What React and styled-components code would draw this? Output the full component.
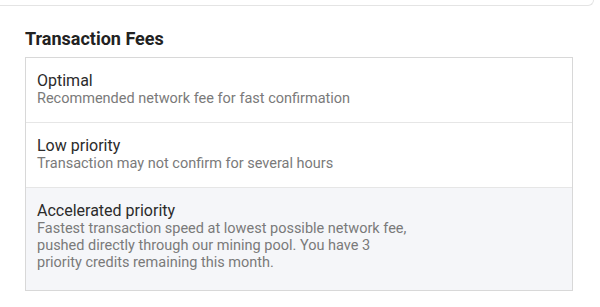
import styled, { createGlobalStyle } from 'styled-components';

const Global = createGlobalStyle`
  body {
    margin: 0;
    background: #ffffff;
    font-family: Roboto, "Liberation Sans", sans-serif;
  }
`;

const Page = styled.div`
  width: 600px;
  height: 307px;
  overflow: hidden;
  background: #fff;
`;

const PrevCard = styled.div`
  width: 594px;
  height: 6px;
  border-bottom: 1px solid #e4e4e4;
  border-right: 1px solid #e4e4e4;
  border-bottom-right-radius: 6px;
  box-sizing: border-box;
`;

const Section = styled.section`
  padding: 22px 27px 0 25px;
`;

const Title = styled.h2`
  margin: 0 0 8px;
  font-size: 18px;
  line-height: 21px;
  font-weight: 700;
  color: #222;
`;

const List = styled.div`
  border: 1px solid #d8d8d8;
  display: flex;
  flex-direction: column;
`;

const Option = styled.div`
  padding: 14px 11px ${p => (p.selected ? '19px' : '15px')};
  background: ${p => (p.selected ? '#f5f6f9' : '#fff')};
  border-top: ${p => (p.first ? 'none' : '1px solid #e6e6e6')};
`;

const OptionName = styled.div`
  font-size: 16px;
  line-height: 18px;
  color: #2b2b2b;
`;

const OptionDesc = styled.div`
  font-size: 14.5px;
  line-height: 17px;
  color: #7a7a7a;
  max-width: 376px;
`;

const options = [
  { name: 'Optimal', desc: 'Recommended network fee for fast confirmation' },
  { name: 'Low priority', desc: 'Transaction may not confirm for several hours' },
  {
    name: 'Accelerated priority',
    desc: 'Fastest transaction speed at lowest possible network fee, pushed directly through our mining pool. You have 3 priority credits remaining this month.',
    selected: true,
  },
];

export default function App() {
  return (
    <Page>
      <Global />
      <PrevCard />
      <Section>
        <Title>Transaction Fees</Title>
        <List>
          {options.map((o, i) => (
            <Option key={o.name} first={i === 0} selected={o.selected}>
              <OptionName>{o.name}</OptionName>
              <OptionDesc>{o.desc}</OptionDesc>
            </Option>
          ))}
        </List>
      </Section>
    </Page>
  );
}
